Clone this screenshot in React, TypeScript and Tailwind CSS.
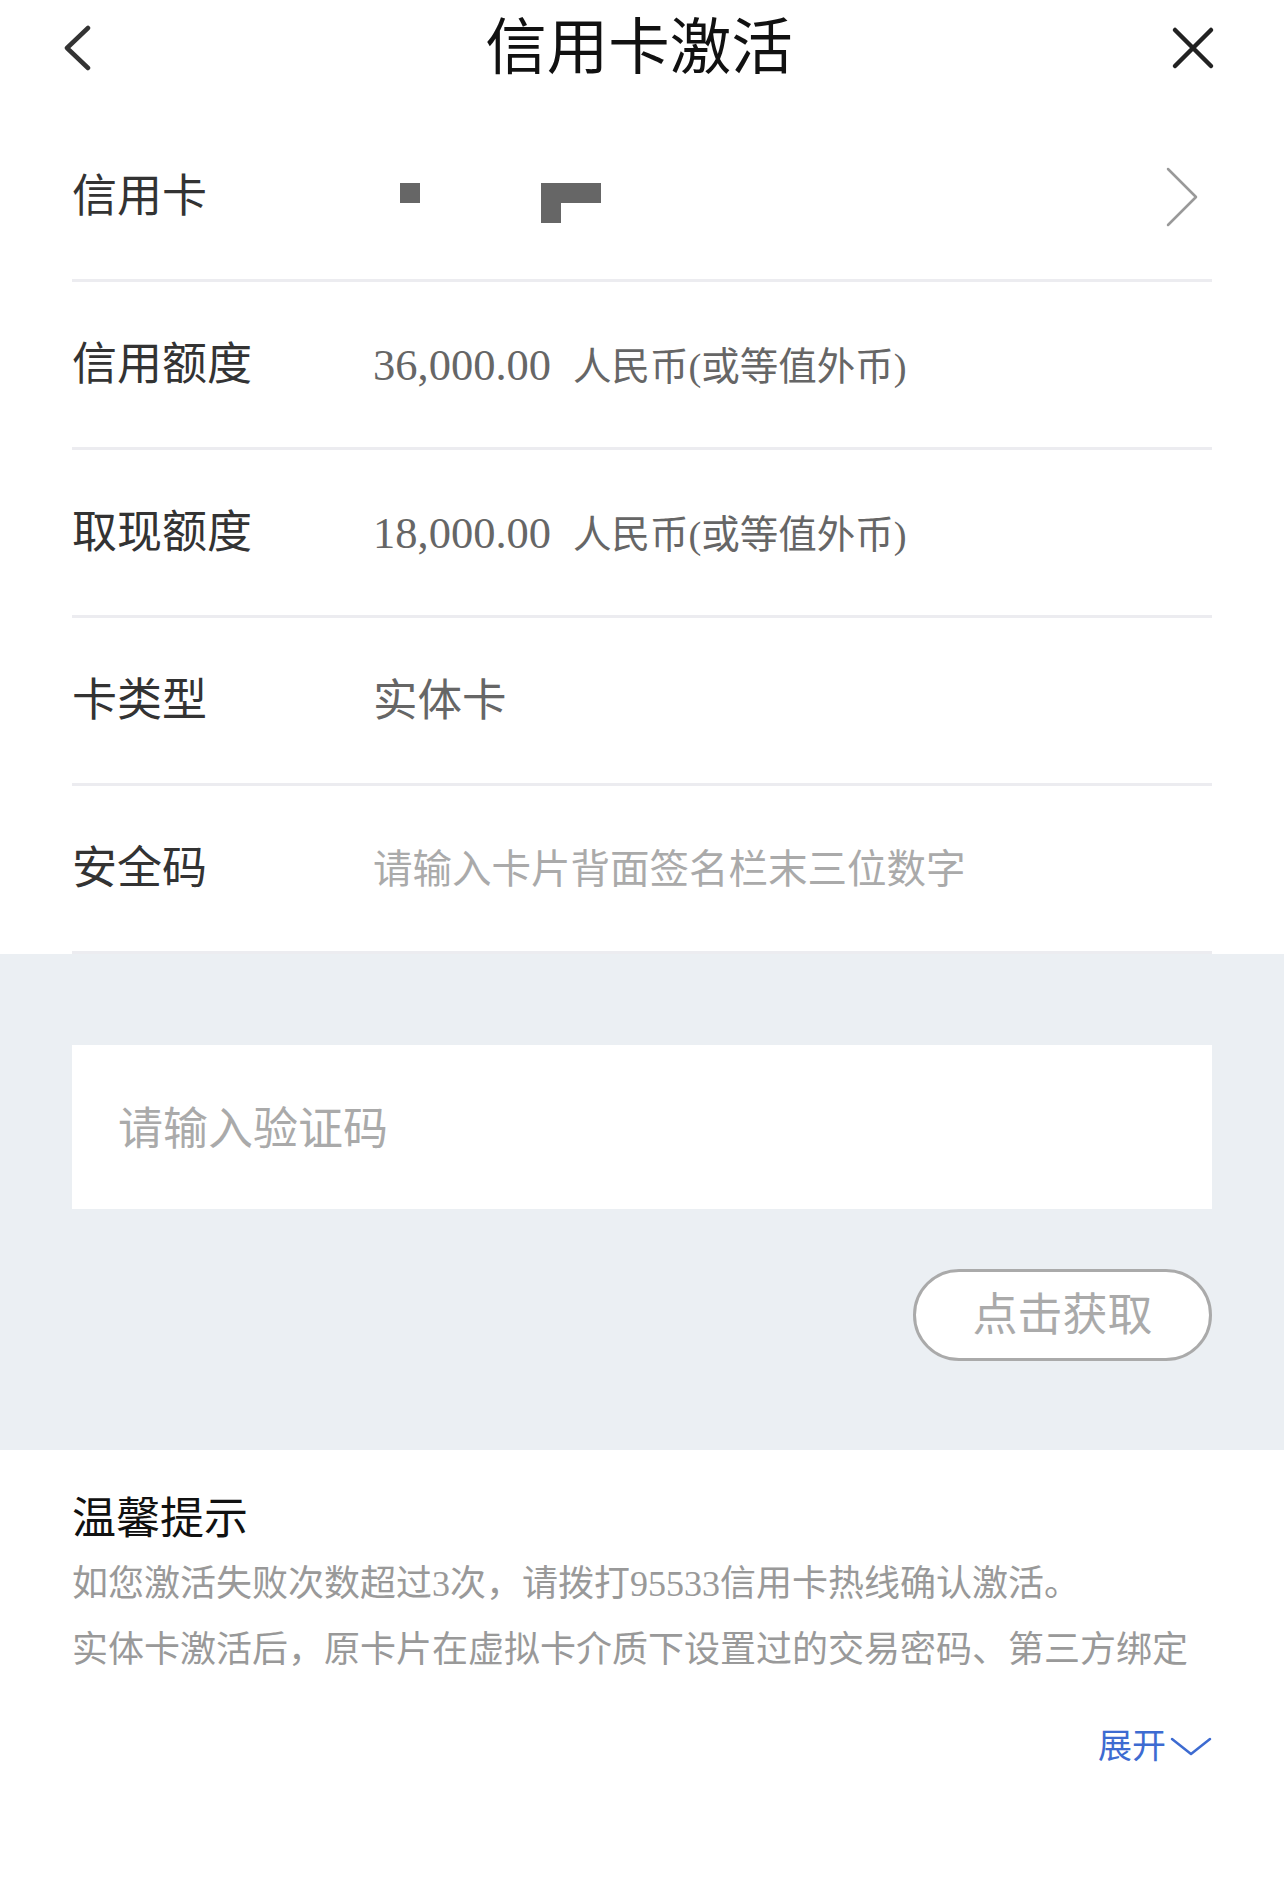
const FONT = "font-['Liberation_Serif','Noto_Sans_CJK_SC',serif]"

type Row = {
  label: string
  value?: React.ReactNode
  chevron?: boolean
}

function CardMask() {
  // redacted card number blocks
  return (
    <div className="flex items-start mt-[12px]">
      <div className="w-[20px] h-[20px] bg-[#666] ml-[27px]" />
      <div className="ml-[121px] flex flex-col">
        <div className="w-[60px] h-[20px] bg-[#666]" />
        <div className="w-[20px] h-[20px] bg-[#666]" />
      </div>
    </div>
  )
}

function Amount({ n }: { n: string }) {
  return (
    <div className="flex items-baseline text-[#666] mt-[2px]">
      <span className="text-[44.5px]">{n}</span>
      <span className="text-[38.5px] ml-[22px]">人民币(或等值外币)</span>
    </div>
  )
}

const rows: Row[] = [
  { label: "信用卡", value: <CardMask />, chevron: true },
  { label: "信用额度", value: <Amount n="36,000.00" /> },
  { label: "取现额度", value: <Amount n="18,000.00" /> },
  { label: "卡类型", value: <span className="block mt-[1px] text-[44.5px] text-[#666]">实体卡</span> },
  {
    label: "安全码",
    value: <span className="block mt-[3px] text-[39.5px] text-[#aaa]">请输入卡片背面签名栏末三位数字</span>,
  },
]

export default function App() {
  return (
    <div className={`w-[1284px] min-h-[1886px] bg-white ${FONT}`}>
      {/* Header */}
      <div className="h-[114px] pb-[18px] flex items-center pl-[63px] pr-[69px]">
        <div className="w-[200px] flex">
          <svg width="28" height="46" viewBox="0 0 28 46" fill="none">
            <path d="M25 3 L4 23 L25 43" stroke="#333" strokeWidth="4.5" strokeLinecap="round" strokeLinejoin="round" />
          </svg>
        </div>
        <h1 className="flex-1 text-center text-[61.5px] leading-[70px] text-[#111]">信用卡激活</h1>
        <div className="w-[200px] flex justify-end">
          <svg width="44" height="44" viewBox="0 0 44 44" fill="none">
            <path d="M4 4 L40 40 M40 4 L4 40" stroke="#222" strokeWidth="4.5" strokeLinecap="round" />
          </svg>
        </div>
      </div>

      {/* Info rows */}
      <div className="mx-[72px]">
        {rows.map(r => (
          <div key={r.label} className="h-[168px] flex items-center border-b-[3px] border-[#ececf0]">
            <span className="w-[301px] shrink-0 text-[45px] leading-[56px] text-[#333]">{r.label}</span>
            <div className="leading-[56px]">{r.value}</div>
            {r.chevron && (
              <svg className="ml-auto mr-[13px]" width="34" height="62" viewBox="0 0 34 62" fill="none">
                <path d="M3 3 L31 31 L3 59" stroke="#999" strokeWidth="2.5" strokeLinecap="round" strokeLinejoin="round" />
              </svg>
            )}
          </div>
        ))}
      </div>

      {/* Verify code */}
      <div className="bg-[#ebeff3] px-[72px] pt-[91px] pb-[89px]">
        <div className="h-[164px] bg-white flex items-center pl-[46px] pt-[8px]">
          <span className="text-[45px] text-[#aaa]">请输入验证码</span>
        </div>
        <div className="flex justify-end mt-[60px]">
          <button className="w-[299px] h-[92px] rounded-full border-[3px] border-[#aaa] bg-white text-[45px] text-[#aaa] flex items-center justify-center pt-[4px]">
            点击获取
          </button>
        </div>
      </div>

      {/* Tips */}
      <div className="px-[72px] pt-[44px]">
        <h2 className="text-[44px] leading-[52px] text-[#111]">温馨提示</h2>
        <div className="mt-[5px] text-[36px] leading-[66px] text-[#999] whitespace-nowrap">
          <p>如您激活失败次数超过3次，请拨打95533信用卡热线确认激活。</p>
          <p>实体卡激活后，原卡片在虚拟卡介质下设置过的交易密码、第三方绑定</p>
        </div>
        <div className="flex justify-end items-center mt-[46px] text-[#3d6bd1]">
          <span className="text-[34px] leading-[36px]">展开</span>
          <svg className="ml-[4px]" width="42" height="20" viewBox="0 0 42 20" fill="none">
            <path d="M2 2 L21 17 L40 2" stroke="#3d6bd1" strokeWidth="2.5" strokeLinecap="round" strokeLinejoin="round" />
          </svg>
        </div>
      </div>
    </div>
  )
}
